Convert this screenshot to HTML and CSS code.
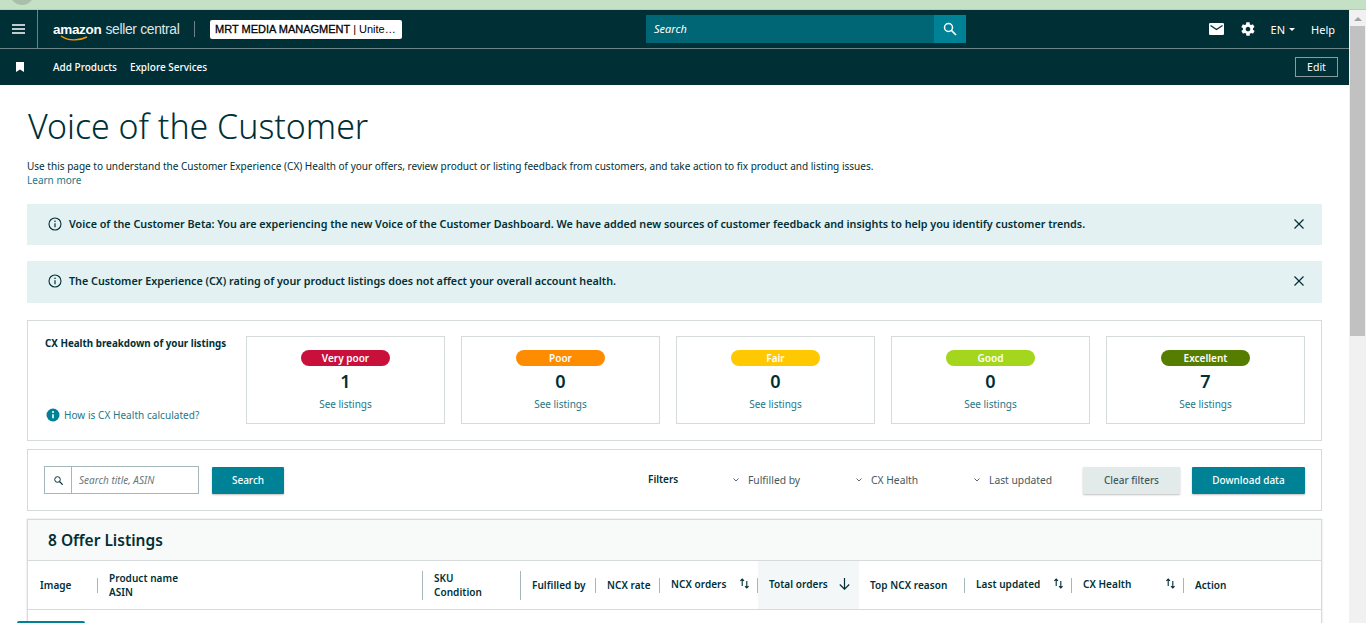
FILE: index.html
```html
<!DOCTYPE html>
<html lang="en">
<head>
    <meta charset="UTF-8">
    <title>Voice of the Customer</title>
    <link rel="stylesheet" href="styles.css">
</head>
<body>
    <div class="browser-strip"><span class="strip-circle"></span></div>
    <div class="window">
        <div class="page">
            <div class="topnav">
                <div class="nav-main">
                    <button class="menu-btn" aria-label="Menu">
                        <svg width="13" height="10" viewBox="0 0 13 10"><path d="M0 1h13M0 5h13M0 9h13" stroke="#fff" stroke-width="1.5"/></svg>
                    </button>
                    <div class="logo">
                        <span class="logo-amazon">amazon</span><span class="logo-seller">seller central</span>
                        <svg class="logo-smile" width="28" height="6" viewBox="0 0 28 6"><path d="M1 1c7 5 18 5 26 1" fill="none" stroke="#f90" stroke-width="1.4"/></svg>
                    </div>
                    <span class="logo-divider"></span>
                    <div class="account-picker"><b>MRT MEDIA MANAGMENT</b> | Unite…</div>
                    <div class="nav-search">
                        <span class="nav-search-input">Search</span>
                        <span class="nav-search-btn">
                            <svg width="14" height="14" viewBox="0 0 14 14"><circle cx="5.5" cy="5.5" r="4" fill="none" stroke="#fff" stroke-width="1.5"/><path d="M8.5 8.5l4.5 4.5" stroke="#fff" stroke-width="1.7"/></svg>
                        </span>
                    </div>
                    <div class="nav-right">
                        <svg width="15" height="12" viewBox="0 0 15 12"><rect width="15" height="12" rx="1.3" fill="#fff"/><path d="M1.5 2.5l6 4 6-4" fill="none" stroke="#002f36" stroke-width="1.3"/></svg>
                        <svg class="gear" width="16" height="16" viewBox="0 0 24 24"><path fill="#fff" d="M19.4 13c.1-.3.1-.7.1-1s0-.7-.1-1l2.1-1.6c.2-.2.2-.4.1-.6l-2-3.5c-.1-.2-.4-.3-.6-.2l-2.5 1c-.5-.4-1.1-.7-1.700-1L14.4 2.400c0-.2-.2-.4-.5-.4h-4c-.2 0-.4.2-.5.4L9 5.100c-.6.2-1.200.6-1.700 1l-2.500-1c-.2-.1-.5 0-.6.2l-2 3.500c-.1.2-.1.5.1.6L4.500 11c0 .3-.1.7-.1 1s0 .7.1 1l-2.100 1.600c-.2.2-.2.4-.1.6l2 3.500c.1.2.4.3.6.2l2.500-1c.5.4 1.100.7 1.700 1l.4 2.700c0 .2.2.4.5.4h4c.2 0 .4-.2.5-.4l.4-2.700c.6-.2 1.200-.6 1.700-1l2.500 1c.2.1.5 0 .6-.2l2-3.500c.1-.2.1-.5-.1-.6L19.400 13zM12 15.500c-1.900 0-3.500-1.600-3.500-3.500s1.600-3.500 3.500-3.500 3.500 1.600 3.500 3.500-1.600 3.500-3.500 3.500z"/></svg>
                        <span class="nav-lang">EN<i class="caret"></i></span>
                        <span class="nav-help">Help</span>
                    </div>
                </div>
                <div class="nav-sub">
                    <svg class="bookmark" width="8" height="10" viewBox="0 0 8 10"><path fill="#fff" d="M0 0h8v10L4 7.5 0 10z"/></svg>
                    <a class="nav-link">Add Products</a>
                    <a class="nav-link">Explore Services</a>
                    <span class="edit-btn">Edit</span>
                </div>
            </div>

            <div class="content">
                <h1 class="page-title">Voice of the Customer</h1>
                <p class="page-desc">Use this page to understand the Customer Experience (CX) Health of your offers, review product or listing feedback from customers, and take action to fix product and listing issues.</p>
                <a class="learn-more">Learn more</a>

                <div class="alert alert-first">
                    <svg class="info-icon" width="14" height="14" viewBox="0 0 14 14"><circle cx="7" cy="7" r="6" fill="none" stroke="#002f36" stroke-width="1.1"/><path d="M7 6.2v4" stroke="#002f36" stroke-width="1.2"/><circle cx="7" cy="4.2" r=".8" fill="#002f36"/></svg>
                    <span class="alert-text">Voice of the Customer Beta: You are experiencing the new Voice of the Customer Dashboard. We have added new sources of customer feedback and insights to help you identify customer trends.</span>
                    <svg class="close-icon" width="10" height="10" viewBox="0 0 10 10"><path d="M.5.5l9 9M9.5.5l-9 9" stroke="#002f36" stroke-width="1.2"/></svg>
                </div>
                <div class="alert alert-second">
                    <svg class="info-icon" width="14" height="14" viewBox="0 0 14 14"><circle cx="7" cy="7" r="6" fill="none" stroke="#002f36" stroke-width="1.1"/><path d="M7 6.2v4" stroke="#002f36" stroke-width="1.2"/><circle cx="7" cy="4.2" r=".8" fill="#002f36"/></svg>
                    <span class="alert-text">The Customer Experience (CX) rating of your product listings does not affect your overall account health.</span>
                    <svg class="close-icon" width="10" height="10" viewBox="0 0 10 10"><path d="M.5.5l9 9M9.5.5l-9 9" stroke="#002f36" stroke-width="1.2"/></svg>
                </div>

                <div class="panel health-panel">
                    <div class="health-intro">
                        <div class="health-title">CX Health breakdown of your listings</div>
                        <div class="health-help">
                            <svg width="14" height="14" viewBox="0 0 14 14"><circle cx="7" cy="7" r="6.5" fill="#008296"/><path d="M7 6.2v4" stroke="#fff" stroke-width="1.6"/><circle cx="7" cy="4" r="1" fill="#fff"/></svg>
                            <a>How is CX Health calculated?</a>
                        </div>
                    </div>
                    <div class="health-card"><span class="pill pill-verypoor">Very poor</span><span class="health-num">1</span><a>See listings</a></div>
                    <div class="health-card"><span class="pill pill-poor">Poor</span><span class="health-num">0</span><a>See listings</a></div>
                    <div class="health-card"><span class="pill pill-fair">Fair</span><span class="health-num">0</span><a>See listings</a></div>
                    <div class="health-card"><span class="pill pill-good">Good</span><span class="health-num">0</span><a>See listings</a></div>
                    <div class="health-card"><span class="pill pill-excellent">Excellent</span><span class="health-num">7</span><a>See listings</a></div>
                </div>

                <div class="panel filter-panel">
                    <div class="search-box">
                        <span class="search-box-icon">
                            <svg width="9" height="9" viewBox="0 0 9 9"><circle cx="3.5" cy="3.5" r="2.8" fill="none" stroke="#002f36" stroke-width="1"/><path d="M5.5 5.5L8.7 8.7" stroke="#002f36" stroke-width="1.2"/></svg>
                        </span>
                        <span class="search-box-input">Search title, ASIN</span>
                    </div>
                    <span class="btn btn-search">Search</span>
                    <span class="filters-label">Filters</span>
                    <span class="filter filter-fulfilled"><svg width="6" height="4" viewBox="0 0 6 4"><path d="M.5.5L3 3 5.5.5" fill="none" stroke="#536b70"/></svg>Fulfilled by</span>
                    <span class="filter filter-health"><svg width="6" height="4" viewBox="0 0 6 4"><path d="M.5.5L3 3 5.5.5" fill="none" stroke="#536b70"/></svg>CX Health</span>
                    <span class="filter filter-updated"><svg width="6" height="4" viewBox="0 0 6 4"><path d="M.5.5L3 3 5.5.5" fill="none" stroke="#536b70"/></svg>Last updated</span>
                    <span class="btn btn-clear">Clear filters</span>
                    <span class="btn btn-download">Download data</span>
                </div>

                <div class="listings">
                    <div class="listings-head">8 Offer Listings</div>
                    <div class="table-head">
                        <div class="th col-image"><span>Image</span></div>
                        <div class="th col-product th-tall"><span>Product name<br>ASIN</span></div>
                        <div class="th col-sku th-tall"><span>SKU<br>Condition</span></div>
                        <div class="th col-fulfilled"><span>Fulfilled by</span></div>
                        <div class="th col-rate"><span>NCX rate</span></div>
                        <div class="th col-ncx th-sort"><span>NCX orders</span><svg width="9" height="11" viewBox="0 0 9 11"><path d="M2.2 8V1.2M.4 2.8L2.2 1 4 2.8M6.8 3v6.8M5 8.2L6.800 10l1.800-1.800" fill="none" stroke="#002f36" stroke-width="1.1"/></svg></div>
                        <div class="th col-total th-sort th-active"><span>Total orders</span><svg width="11" height="12" viewBox="0 0 11 12"><path d="M5.5 0v11M.8 6.500l4.700 4.700 4.700-4.700" fill="none" stroke="#002f36" stroke-width="1.2"/></svg></div>
                        <div class="th col-reason"><span>Top NCX reason</span></div>
                        <div class="th col-updated th-sort"><span>Last updated</span><svg width="9" height="11" viewBox="0 0 9 11"><path d="M2.2 8V1.2M.4 2.8L2.2 1 4 2.8M6.8 3v6.8M5 8.2L6.800 10l1.800-1.800" fill="none" stroke="#002f36" stroke-width="1.1"/></svg></div>
                        <div class="th col-health th-sort"><span>CX Health</span><svg width="9" height="11" viewBox="0 0 9 11"><path d="M2.2 8V1.2M.4 2.8L2.2 1 4 2.8M6.8 3v6.8M5 8.2L6.800 10l1.800-1.800" fill="none" stroke="#002f36" stroke-width="1.1"/></svg></div>
                        <div class="th col-action"><span>Action</span></div>
                    </div>
                    <div class="table-body"></div>
                </div>
            </div>
            <div class="feedback-tab"></div>
        </div>
        <div class="scrollbar">
            <span class="scroll-arrow"></span>
            <span class="scroll-thumb"></span>
        </div>
    </div>
</body>
</html>
```

FILE: styles.css
```css
:root {
    --ink: #002f36;
    --teal: #008296;
    --link: #23788a;
    --line: #d5dbdb;
}

* {
    margin: 0;
    padding: 0;
    box-sizing: border-box;
}

html, body {
    height: 623px;
    overflow: hidden;
}

body {
    font-family: "Noto Sans", "Liberation Sans", sans-serif;
    font-size: 10px;
    color: var(--ink);
    background-color: #fff;
}

.browser-strip {
    height: 10px;
    background-color: #c5e1c5;
    border-bottom: 1px solid #b5cfb5;
    overflow: hidden;
}

.strip-circle {
    display: block;
    width: 24px;
    height: 24px;
    margin: -19px 0 0 10px;
    border-radius: 50%;
    background-color: #a9bfa9;
}

.window {
    display: flex;
    height: 613px;
}

.page {
    position: relative;
    flex: 1;
    min-width: 0;
    overflow: hidden;
}

/* top nav */
.topnav {
    background-color: var(--ink);
    color: #fff;
}

.nav-main {
    display: flex;
    align-items: center;
    height: 39px;
    border-bottom: 1px solid #6f8387;
}

.menu-btn {
    display: flex;
    align-items: center;
    justify-content: center;
    flex: none;
    width: 38px;
    height: 38px;
    background: none;
    border: none;
    border-right: 1px solid #6f8387;
}

.logo {
    position: relative;
    flex: none;
    width: 128px;
    margin-left: 15px;
    white-space: nowrap;
    font-family: "Liberation Sans", sans-serif;
    letter-spacing: -0.3px;
}

.logo-amazon {
    font-size: 13.5px;
    font-weight: 700;
    margin-right: 4px;
}

.logo-seller {
    font-size: 13.8px;
    color: #dfe6e6;
}

.logo-smile {
    position: absolute;
    left: 7px;
    top: 13px;
}

.logo-divider {
    flex: none;
    width: 1px;
    height: 16px;
    margin-left: 13px;
    background-color: #6f8387;
}

.account-picker {
    flex: none;
    width: 192px;
    height: 19px;
    margin-left: 15px;
    padding: 0 5px;
    background-color: #fff;
    border-radius: 2px;
    color: #000;
    font-family: "Liberation Sans", sans-serif;
    font-size: 11px;
    line-height: 19px;
    white-space: nowrap;
    overflow: hidden;
}

.account-picker b {
    font-weight: 400;
    -webkit-text-stroke: 0.3px #000;
}

.nav-search {
    display: flex;
    flex: none;
    width: 320px;
    height: 28px;
    margin-left: 244px;
}

.nav-search-input {
    flex: 1;
    padding-left: 8px;
    background-color: #006574;
    font-size: 11px;
    font-style: italic;
    line-height: 28px;
}

.nav-search-btn {
    display: flex;
    align-items: center;
    justify-content: center;
    width: 32px;
    background-color: var(--teal);
}

.nav-right {
    display: flex;
    align-items: center;
    margin-left: auto;
    padding-right: 14px;
    font-size: 11px;
}

.gear {
    margin-left: 16px;
}

.nav-lang {
    display: flex;
    align-items: center;
    margin-left: 15px;
}

.caret {
    width: 0;
    height: 0;
    margin-left: 4px;
    border: 3.5px solid transparent;
    border-top: 3.5px solid #fff;
    border-bottom: 0;
}

.nav-help {
    margin-left: 16px;
}

.nav-sub {
    display: flex;
    align-items: center;
    height: 36px;
}

.bookmark {
    margin-left: 16px;
}

.nav-link {
    margin-left: 13px;
    font-size: 10px;
    font-weight: 500;
}

.bookmark + .nav-link {
    margin-left: 29px;
}

.edit-btn {
    width: 43px;
    height: 20px;
    margin-left: auto;
    margin-right: 11px;
    border: 1px solid #8a9a9d;
    font-size: 10.5px;
    line-height: 18px;
    text-align: center;
}

/* content */
.content {
    padding: 0 27px;
}

.page-title {
    margin: 17px 0 0 1px;
    font-size: 33.9px;
    font-weight: 300;
    line-height: 48px;
}

.page-desc {
    margin-top: 9px;
    font-size: 10.03px;
    line-height: 14px;
    white-space: nowrap;
}

.learn-more,
.health-help a,
.health-card a {
    color: var(--link);
}

.learn-more {
    display: block;
    font-size: 10px;
    line-height: 14px;
}

.alert {
    display: flex;
    align-items: center;
    padding: 0 18px 2px 21px;
    background-color: #e3f1f2;
    font-size: 10.75px;
    font-weight: 600;
}

.alert-first {
    height: 41px;
    margin-top: 17px;
}

.alert-second {
    height: 42px;
    margin-top: 16px;
}

.alert-text {
    margin-left: 7px;
    white-space: nowrap;
}

.close-icon {
    margin-left: auto;
}

.panel {
    border: 1px solid var(--line);
}

.health-panel {
    display: flex;
    gap: 16px;
    height: 121px;
    margin-top: 17px;
    padding: 15px 16px 16px;
}

.health-intro {
    display: flex;
    flex-direction: column;
    justify-content: space-between;
    width: 186px;
    padding-top: 1px;
}

.health-title {
    margin-left: 1px;
    font-size: 9.8px;
    font-weight: 700;
    line-height: 14px;
}

.health-help {
    display: flex;
    align-items: center;
    gap: 4px;
    margin: 0 0 2px 2px;
    font-size: 10px;
    letter-spacing: 0.05px;
}

.health-card {
    display: flex;
    flex-direction: column;
    align-items: center;
    width: 199px;
    height: 88px;
    padding-top: 13px;
    border: 1px solid var(--line);
    font-size: 10px;
}

.pill {
    width: 89px;
    height: 16px;
    border-radius: 8px;
    color: #fff;
    font-size: 10px;
    font-weight: 600;
    line-height: 16px;
    text-align: center;
}

.pill-verypoor { background-color: #c9103a; }
.pill-poor { background-color: #fe8c00; }
.pill-fair { background-color: #ffc800; }
.pill-good { background-color: #a4d61e; }
.pill-excellent { background-color: #557d00; }

.health-num {
    margin-top: 3px;
    font-size: 18px;
    font-weight: 600;
    line-height: 24px;
}

.health-card a {
    margin-top: 4px;
}

.filter-panel {
    display: flex;
    align-items: center;
    height: 62px;
    margin-top: 8px;
    padding: 0 16px;
}

.search-box {
    display: flex;
    flex: none;
    width: 155px;
    height: 28px;
    border: 1px solid #a6b7ba;
}

.search-box-icon {
    display: flex;
    align-items: center;
    justify-content: center;
    width: 27px;
    border-right: 1px solid #a6b7ba;
}

.search-box-input {
    padding-left: 7px;
    color: #6c7778;
    font-size: 10px;
    font-style: italic;
    line-height: 26px;
}

.btn {
    flex: none;
    height: 27px;
    border-radius: 1px;
    box-shadow: 0 1px 2px rgba(0,0,0,0.25);
    font-size: 10px;
    font-weight: 500;
    line-height: 27px;
    text-align: center;
}

.btn-search,
.btn-download {
    background-color: var(--teal);
    color: #fff;
}

.btn-search {
    width: 72px;
    margin-left: 13px;
}

.filters-label {
    flex: none;
    width: 85px;
    margin: -2px 0 0 364px;
    font-size: 10px;
    font-weight: 600;
}

.filter {
    display: flex;
    align-items: center;
    flex: none;
    gap: 9px;
    color: #44595d;
    font-size: 10.3px;
    white-space: nowrap;
}

.filter-fulfilled { width: 123px; }
.filter-health { width: 118px; }
.filter-updated { flex: 1; }

.btn-clear {
    width: 97px;
    background-color: #e3eaea;
    color: #44595d;
}

.btn-download {
    width: 113px;
    margin-left: 12px;
}

.listings {
    margin-top: 8px;
    border: 1px solid var(--line);
    border-bottom: 0;
    box-shadow: 0 0 2px rgba(0,0,0,0.15);
}

.listings-head {
    height: 41px;
    padding-left: 20px;
    background-color: #f8f9f9;
    border-bottom: 1px solid var(--line);
    font-size: 15.5px;
    font-weight: 600;
    line-height: 41px;
}

.table-head {
    display: flex;
    height: 49px;
    border-bottom: 1px solid var(--line);
}

.table-body {
    height: 40px;
}

.th {
    position: relative;
    display: flex;
    align-items: center;
    justify-content: space-between;
    padding-left: 11px;
    font-size: 10px;
    font-weight: 600;
    letter-spacing: 0.05px;
    line-height: 14px;
    white-space: nowrap;
}

.th::after {
    content: "";
    position: absolute;
    top: 17px;
    bottom: 16px;
    right: 0;
    width: 1px;
    background-color: #a6b7ba;
}

.th-tall::after {
    top: 10px;
    bottom: 9px;
}

.th-sort {
    padding-right: 9px;
}

.th-sort span {
    margin-top: -2px;
}

.th-sort svg {
    margin-top: -3px;
}

.th-active {
    background-color: #f4f7f8;
}

.col-image { width: 70px; padding-left: 12px; }
.col-product { width: 325px; }
.col-sku { width: 98px; }
.col-fulfilled { width: 75px; }
.col-rate { width: 64px; }
.col-ncx { width: 98px; }
.col-total { width: 101px; }
.col-reason { width: 106px; }
.col-updated { width: 107px; }
.col-health { width: 112px; }
.col-action { flex: 1; }

.col-action::after,
.col-total::after {
    display: none;
}

.feedback-tab {
    position: absolute;
    left: 17px;
    bottom: 0;
    width: 68px;
    height: 2px;
    background-color: var(--teal);
    border-radius: 3px 3px 0 0;
}

/* browser scrollbar */
.scrollbar {
    display: flex;
    flex-direction: column;
    align-items: center;
    flex: none;
    width: 17px;
    background-color: #f1f1f1;
}

.scroll-arrow {
    width: 0;
    height: 0;
    margin-top: 7px;
    border: 4px solid transparent;
    border-bottom: 4px solid #a3a3a3;
    border-top: 0;
}

.scroll-thumb {
    width: 15px;
    height: 310px;
    margin-top: 5px;
    background-color: #c1c1c1;
}
```
